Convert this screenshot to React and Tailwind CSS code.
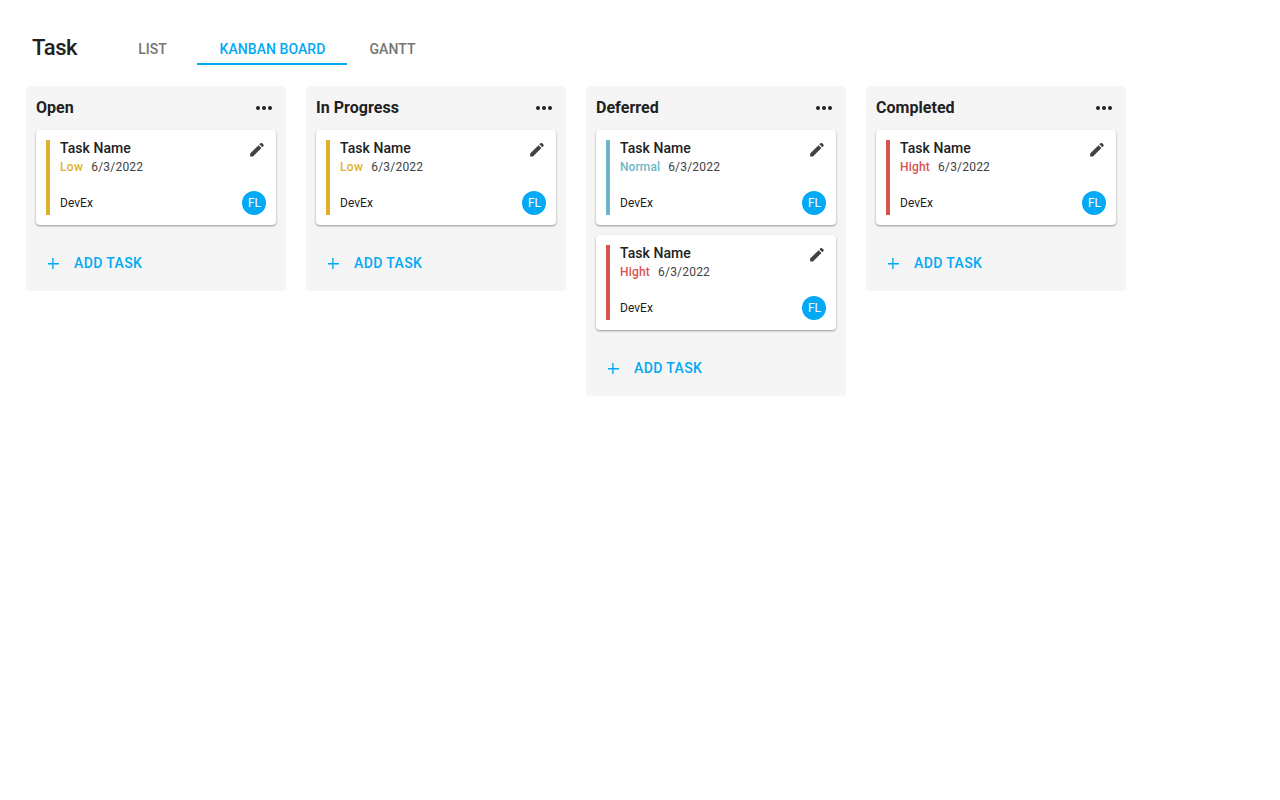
const PRIORITIES = {
  Low: { text: 'text-[#e0b12c] tracking-[0.35px]', bar: 'bg-[#deb02b]' },
  Normal: { text: 'text-[#6bb9c8] tracking-[0.1px]', bar: 'bg-[#6bb9c8]' },
  Hight: { text: 'text-[#d9534f] tracking-[0.2px]', bar: 'bg-[#d9534f]' },
};

const COLUMNS = [
  { title: 'Open', tasks: ['Low'] },
  { title: 'In Progress', tasks: ['Low'] },
  { title: 'Deferred', tasks: ['Normal', 'Hight'] },
  { title: 'Completed', tasks: ['Hight'] },
];

const TABS = [
  { label: 'LIST', width: 'w-[90px]' },
  { label: 'KANBAN BOARD', width: 'w-[150px]', active: true },
  { label: 'GANTT', width: 'w-[90px]' },
];

function TaskCard({ priority }) {
  const style = PRIORITIES[priority];
  return (
    <article className="flex h-[95px] rounded bg-white p-2.5 shadow-[0_1px_3px_rgba(0,0,0,0.16),0_1px_2px_rgba(0,0,0,0.24)]">
      <div className={`w-1 shrink-0 ${style.bar}`} />
      <div className="ml-2.5 flex grow flex-col justify-between">
        <div className="flex justify-between">
          <div>
            <h3 className="text-sm leading-4 font-medium tracking-[0.05px] text-[#212121]">Task Name</h3>
            <div className="mt-0.5 flex gap-2 text-xs leading-[18px]">
              <span className={`font-medium ${style.text}`}>{priority}</span>
              <span className="tracking-[0.2px] text-[#424242]">6/3/2022</span>
            </div>
          </div>
          <svg className="mt-px size-[18px]" viewBox="0.2 0.7 23.6 23.6" fill="#424242">
            <path d="M3 17.25V21h3.75L17.81 9.94l-3.75-3.75L3 17.25zM20.71 7.04a1 1 0 0 0 0-1.41l-2.34-2.34a1 1 0 0 0-1.41 0l-1.83 1.83 3.75 3.75 1.83-1.83z" />
          </svg>
        </div>
        <div className="flex items-center justify-between text-xs text-[#212121]">
          <span className="tracking-[0.05px]">DevEx</span>
          <span className="flex size-6 items-center justify-center rounded-full bg-[#03a9f4] pl-px text-white">FL</span>
        </div>
      </div>
    </article>
  );
}

function Column({ title, tasks }) {
  return (
    <section className="w-[260px] rounded bg-[#f5f5f5] px-2.5">
      <header className="flex h-11 items-center justify-between pr-1">
        <h2 className="text-base leading-6 font-bold tracking-[0.04px] text-[#212121]">{title}</h2>
        <svg className="size-4" viewBox="0 0 16 16" fill="#212121">
          <circle cx="2" cy="8" r="2" />
          <circle cx="8" cy="8" r="2" />
          <circle cx="14" cy="8" r="2" />
        </svg>
      </header>
      <div className="flex flex-col gap-2.5">
        {tasks.map((priority, i) => (
          <TaskCard key={i} priority={priority} />
        ))}
      </div>
      <div className="flex h-[66px] items-center pt-2.5">
        <button className="flex items-center pl-3 text-sm font-medium tracking-[0.38px] text-[#03a9f4]">
          <svg className="mt-px mr-[15px] size-[11px]" viewBox="0 0 11 11" fill="currentColor">
            <path d="M4.2 0h1.4v5H11v1.4H5.6V11H4.2V6.4H0V5h4.2z" />
          </svg>
          ADD TASK
        </button>
      </div>
    </section>
  );
}

export default function App() {
  return (
    <main className="h-screen overflow-hidden bg-white font-['Roboto',sans-serif]">
      <div className="flex h-[86px] items-start pt-[33px] pl-8">
        <h1 className="w-[75px] pt-px text-[22px] leading-7 font-medium tracking-[-0.35px] text-[#212121]">Task</h1>
        <nav className="flex">
          {TABS.map(({ label, width, active }) => (
            <button
              key={label}
              className={`h-8 border-b-2 pt-0.5 pl-px text-sm leading-7 font-medium tracking-[0.05px] ${width} ${
                active ? 'border-[#03a9f4] text-[#03a9f4]' : 'border-transparent text-[#757575]'
              }`}
            >
              {label}
            </button>
          ))}
        </nav>
      </div>
      <div className="flex items-start gap-5 pl-[26px]">
        {COLUMNS.map((column) => (
          <Column key={column.title} {...column} />
        ))}
      </div>
    </main>
  );
}
